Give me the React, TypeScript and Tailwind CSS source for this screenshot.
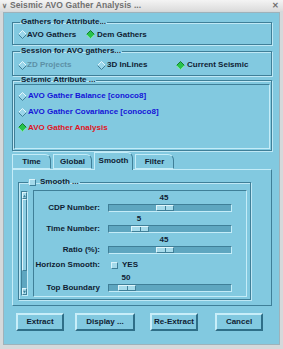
import React from "react";

type SliderRow = { label: string; value: string; offset: number };

const sliders: SliderRow[] = [
  { label: "CDP Number:", value: "45", offset: 47 },
  { label: "Time Number:", value: "5", offset: 22 },
  { label: "Ratio (%):", value: "45", offset: 47 },
];

function Diamond({ on }: { on?: boolean }) {
  return (
    <svg width="9" height="9" viewBox="0 0 9 9" className="shrink-0">
      <polygon points="4.5,0.5 8.5,4.5 4.5,8.5 0.5,4.5" fill={on ? "#27c24c" : "#9ad6ea"} />
      <polyline points="0.5,4.5 4.5,0.5 8.5,4.5" fill="none" stroke={on ? "#137a2c" : "#e6f7fc"} />
      <polyline points="0.5,4.5 4.5,8.5 8.5,4.5" fill="none" stroke={on ? "#7ee89a" : "#3f7f98"} />
    </svg>
  );
}

function Check() {
  return (
    <span className="inline-block h-[7px] w-[7px] shrink-0 border border-t-[#d8f3fb] border-l-[#d8f3fb] border-b-[#3f7f98] border-r-[#3f7f98] bg-[#a4daeb]" />
  );
}

function Slider({ offset }: { offset: number }) {
  return (
    <div className="flex h-[8px] w-[124px] items-center border border-t-[#3f7f98] border-l-[#3f7f98] border-b-[#c4ecf8] border-r-[#c4ecf8] bg-[#5ea6c0]">
      <div
        style={{ marginLeft: offset }}
        className="flex h-[6px] w-[18px] justify-center border border-t-[#e0f6fc] border-l-[#e0f6fc] border-b-[#3f7f98] border-r-[#3f7f98] bg-[#a6dbeb]"
      >
        <div className="h-full w-[1px] bg-[#3f7f98]" />
      </div>
    </div>
  );
}

function SliderBlock({ row, className = "" }: { row: SliderRow; className?: string }) {
  return (
    <div className={`flex ${className}`}>
      <div className="flex w-[66px] flex-col justify-end">
        <div className="h-[8px] text-right leading-[8px]">{row.label}</div>
      </div>
      <div className="ml-[8px] w-[124px]">
        <div style={{ marginLeft: row.offset }} className="h-[10px] w-[18px] text-center leading-[10px]">
          {row.value}
        </div>
        <div className="mt-[1px]">
          <Slider offset={row.offset} />
        </div>
      </div>
    </div>
  );
}

const groupCls =
  "border border-[#3f7f98] shadow-[inset_1px_1px_0_#bfe8f5,1px_1px_0_#bfe8f5]";

export default function App() {
  return (
    <div
      className="flex h-[349px] w-[283px] flex-col bg-[#d5d9db] text-[8px] font-bold text-[#0f1d33]"
      style={{ fontFamily: '"Liberation Sans", Arial, sans-serif' }}
    >
      {/* title bar */}
      <div className="flex h-[11px] items-center bg-gradient-to-b from-[#f4f4f4] to-[#dcdcdc] px-[2px] text-[#707070]">
        <span className="w-[8px] text-[7px] leading-[8px]">∨</span>
        <span className="text-[8.5px] font-semibold leading-[11px] tracking-[0.1px]">Seismic AVO Gather Analysis ...</span>
        <span className="ml-auto mr-[2px] text-[8px] leading-[11px]">✕</span>
      </div>

      <div className="mx-[3px] mt-[1px] flex h-[333px] flex-col border border-[#9fb2ba] bg-[#82c9e0] pl-[8px] pr-[7px]">
        {/* gathers */}
        <fieldset className={`mt-[5px] ${groupCls}`}>
          <legend className="ml-[7px] px-[1px] leading-[8px]">Gathers for Attribute...</legend>
          <div className="flex h-[18px] items-center pb-[1px] pl-[5px]">
            <div className="flex w-[68px] items-center">
              <Diamond />
              <span>AVO Gathers</span>
            </div>
            <div className="flex items-center">
              <Diamond on />
              <span className="ml-[2px]">Dem Gathers</span>
            </div>
          </div>
        </fieldset>

        {/* session */}
        <fieldset className={`mt-[2px] ${groupCls}`}>
          <legend className="ml-[7px] px-[1px] leading-[8px]">Session for AVO gathers...</legend>
          <div className="flex h-[20px] items-center pl-[5px]">
            <div className="flex w-[79px] items-center text-[#5c90a6]">
              <Diamond />
              <span>ZD Projects</span>
            </div>
            <div className="flex w-[79px] items-center">
              <Diamond />
              <span className="ml-[1px]">3D InLines</span>
            </div>
            <div className="flex items-center">
              <Diamond on />
              <span className="ml-[2px]">Current Seismic</span>
            </div>
          </div>
        </fieldset>

        {/* attribute list */}
        <fieldset className={`${groupCls}`}>
          <legend className="ml-[7px] px-[1px] leading-[8px]">Seismic Attribute ...</legend>
          <div className="mx-[1px] mb-[1px] h-[65px] border border-t-[#3f7f98] border-l-[#3f7f98] border-b-[#c4ecf8] border-r-[#c4ecf8] pl-[3px] pt-[3px]">
            <div className="flex h-[16px] items-center text-[#1414d8]">
              <Diamond />
              <span className="ml-[1px]">AVO Gather Balance [conoco8]</span>
            </div>
            <div className="flex h-[16px] items-center text-[#1414d8]">
              <Diamond />
              <span className="ml-[1px]">AVO Gather Covariance [conoco8]</span>
            </div>
            <div className="flex h-[15px] items-center text-[#e0141e]">
              <Diamond on />
              <span className="ml-[1px]">AVO Gather Analysis</span>
            </div>
          </div>
        </fieldset>

        {/* tabs */}
        <div className="mt-[1px] flex h-[17px] items-end gap-[2px]">
          {["Time", "Global", "Smooth", "Filter"].map((t) => {
            const active = t === "Smooth";
            return (
              <div
                key={t}
                className={`flex w-[39px] items-center justify-center rounded-tr-[6px] border-l border-t border-r border-l-[#c4ecf8] border-t-[#c4ecf8] border-r-[#3f7f98] ${
                  active ? "relative z-10 -mb-[1px] h-[18px] bg-[#82c9e0] pb-[1px]" : "h-[15px] border-b border-b-[#c4ecf8]"
                }`}
              >
                {t}
              </div>
            );
          })}
        </div>

        {/* panel */}
        <div className="flex h-[137px] flex-col border border-t-[#c4ecf8] border-l-[#c4ecf8] border-b-[#3f7f98] border-r-[#3f7f98] pl-[5px] pt-[8px]">
          <fieldset className={`w-[233px] ${groupCls}`}>
            <legend className="ml-[9px] flex items-center gap-[4px] px-[1px] leading-[8px]">
              <Check />
              <span>Smooth ...</span>
            </legend>
            <div className="flex pb-[2px] pl-[2px] pt-[4px]">
              {/* scrollbar */}
              <div className="mt-[1px] flex h-[105px] w-[7px] flex-col border border-t-[#3f7f98] border-l-[#3f7f98] border-b-[#c4ecf8] border-r-[#c4ecf8] bg-[#5ea6c0]">
                <div className="flex h-[7px] items-center justify-center border border-t-[#e0f6fc] border-l-[#e0f6fc] border-b-[#3f7f98] border-r-[#3f7f98] bg-[#a6dbeb]">
                  <svg width="5" height="4" viewBox="0 0 5 4">
                    <polygon points="2.5,0 5,4 0,4" fill="#3f7f98" />
                  </svg>
                </div>
                <div className="h-[72px] border border-t-[#e0f6fc] border-l-[#e0f6fc] border-b-[#3f7f98] border-r-[#3f7f98] bg-[#8ecfe4]" />
                <div className="flex-1" />
                <div className="flex h-[7px] items-center justify-center border border-t-[#e0f6fc] border-l-[#e0f6fc] border-b-[#3f7f98] border-r-[#3f7f98] bg-[#a6dbeb]">
                  <svg width="5" height="4" viewBox="0 0 5 4">
                    <polygon points="0,0 5,0 2.5,4" fill="#3f7f98" />
                  </svg>
                </div>
              </div>

              {/* inner area */}
              <div className="ml-[5px] h-[107px] w-[214px] overflow-hidden border border-t-[#3f7f98] border-l-[#3f7f98] border-b-[#c4ecf8] border-r-[#c4ecf8] pt-[2px]">
                {sliders.map((s, i) => (
                  <SliderBlock key={s.label} row={s} className={i > 0 ? "mt-[2px]" : ""} />
                ))}
                <div className="mt-[3px] flex h-[16px] items-center">
                  <div className="w-[66px] text-right">Horizon Smooth:</div>
                  <div className="ml-[11px] flex items-center gap-[4px]">
                    <Check />
                    <span>YES</span>
                  </div>
                </div>
                <SliderBlock row={{ label: "Top Boundary", value: "50", offset: 9 }} />
              </div>
            </div>
          </fieldset>
        </div>

        {/* buttons */}
        <div className="mt-[7px] flex h-[18px] pl-[4px]">
          {[
            { t: "Extract", w: "w-[48px]", m: "" },
            { t: "Display ...", w: "w-[60px]", m: "ml-[11px]" },
            { t: "Re-Extract", w: "w-[48px]", m: "ml-[15px]" },
            { t: "Cancel", w: "w-[48px]", m: "ml-[17px]" },
          ].map((b) => (
            <button
              key={b.t}
              type="button"
              className={`${b.w} ${b.m} flex h-[18px] items-center justify-center border-2 border-t-[#c8eef9] border-l-[#c8eef9] border-b-[#2f6f88] border-r-[#2f6f88] bg-[#82c9e0] font-bold`}
            >
              {b.t}
            </button>
          ))}
        </div>
      </div>
    </div>
  );
}
